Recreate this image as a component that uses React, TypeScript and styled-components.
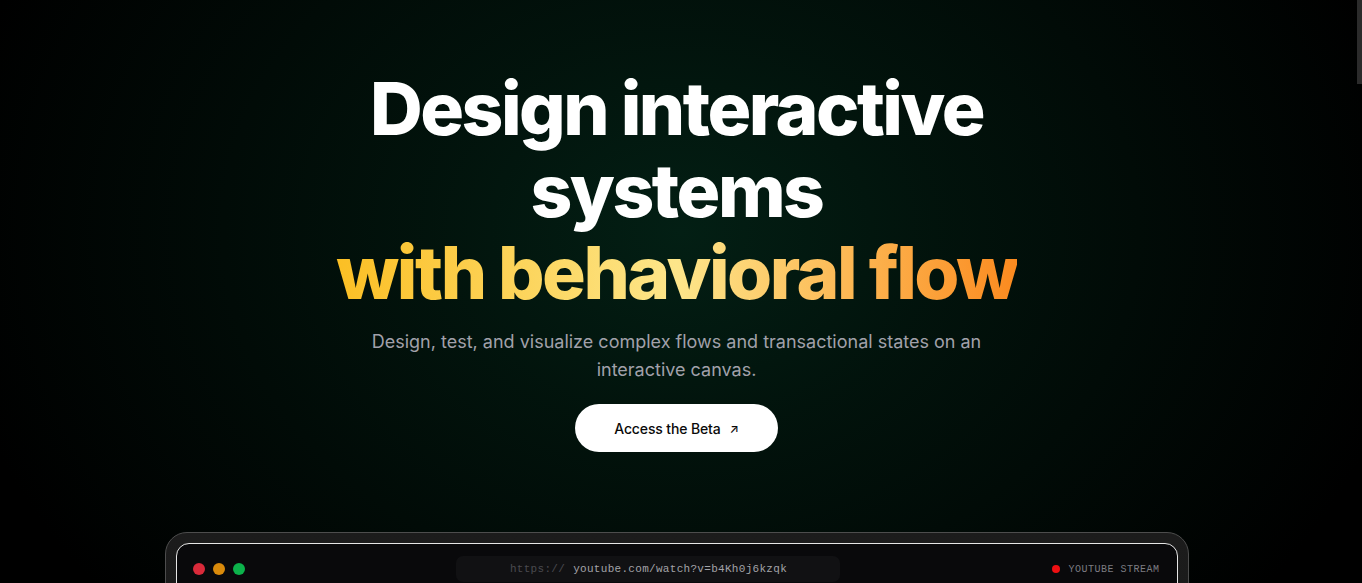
import * as React from "react";
import styled, { createGlobalStyle } from "styled-components";

const GlobalStyle = createGlobalStyle`
  html, body {
    margin: 0;
    padding: 0;
    background: #000;
  }

  * {
    box-sizing: border-box;
  }
`;

const Page = styled.main`
  min-height: 4050px;
  padding-right: 9px;
  background:
    radial-gradient(ellipse 740px 580px at 50% 232px, rgba(3, 31, 20, 1) 0%, rgba(2, 22, 14, 0.85) 35%, rgba(0, 0, 0, 0) 100%),
    #000;
  font-family: Inter, "Noto Sans", sans-serif;
  color: #fff;
`;

/* thin scrollbar drawn over the right edge */
const ScrollThumb = styled.div`
  position: fixed;
  top: 0;
  right: 0;
  width: 5px;
  height: 84px;
  background: #2b2b2b;
`;

const Hero = styled.section`
  display: flex;
  flex-direction: column;
  align-items: center;
  padding-top: 68px;
  text-align: center;
`;

const Heading = styled.h1`
  margin: 0;
  font-family: Inter, "Noto Sans", sans-serif;
  font-weight: 800;
  font-size: 73px;
  line-height: 82px;
  letter-spacing: -0.034em;
  color: #fff;
`;

const Line = styled.span`
  display: block;
`;

const Accent = styled.span`
  display: block;
  background: linear-gradient(90deg, #fbbf24 0%, #fde68a 50%, #fb8a1f 100%);
  -webkit-background-clip: text;
  background-clip: text;
  color: transparent;
`;

const Lead = styled.p`
  max-width: 650px;
  margin: 14px 0 0;
  font-size: 18px;
  line-height: 28px;
  color: #a1a1aa;
`;

const CtaButton = styled.button`
  display: inline-flex;
  align-items: center;
  gap: 9px;
  margin-top: 20px;
  height: 48px;
  padding: 0 39px;
  border: none;
  border-radius: 999px;
  background: #fff;
  color: #0a0a0a;
  font-family: Inter, "Noto Sans", sans-serif;
  font-size: 14px;
  font-weight: 500;
  letter-spacing: -0.01em;
  cursor: pointer;
`;

const Arrow = styled.span`
  font-size: 12px;
`;

const Showcase = styled.div`
  width: 1024px;
  margin: 80px auto 0;
  padding: 10px;
  border: 1px solid #4d4d4d;
  border-radius: 22px;
  background: linear-gradient(180deg, #1c1c1c, #121212);
`;

const Screen = styled.div`
  height: 560px;
  border: 1px solid #e6e6e6;
  border-radius: 13px;
  background: #09090b;
  overflow: hidden;
`;

const WindowBar = styled.div`
  display: flex;
  align-items: center;
  height: 50px;
  padding: 0 17px 0 16px;
`;

const Lights = styled.div`
  display: flex;
  gap: 8px;
`;

const Light = styled.span<{ color: string }>`
  width: 12px;
  height: 12px;
  border-radius: 50%;
  background: ${({ color }) => color};
`;

const AddressSlot = styled.div`
  flex: 1;
  display: flex;
  justify-content: center;
`;

const Address = styled.div`
  display: flex;
  align-items: center;
  justify-content: center;
  gap: 8px;
  width: 384px;
  height: 26px;
  border-radius: 7px;
  background: #111113;
  font-family: "Liberation Mono", "DejaVu Sans Mono", monospace;
  font-size: 11px;
  letter-spacing: 0.3px;
`;

const Scheme = styled.span`
  color: #4a4a4f;
`;

const Url = styled.span`
  color: #a3a3a8;
`;

const Live = styled.div`
  display: flex;
  align-items: center;
  gap: 8px;
  font-family: "Liberation Mono", "DejaVu Sans Mono", monospace;
  font-size: 10px;
  letter-spacing: 0.5px;
  color: #7c7c82;
`;

const LiveDot = styled.span`
  width: 8px;
  height: 8px;
  border-radius: 50%;
  background: #ee0f12;
`;

export default function App() {
  return (
    <Page>
      <GlobalStyle />
      <ScrollThumb />
      <Hero>
        <Heading>
          <Line>Design interactive</Line>
          <Line>systems</Line>
          <Accent>with behavioral flow</Accent>
        </Heading>
        <Lead>
          Design, test, and visualize complex flows and transactional states on
          an interactive canvas.
        </Lead>
        <CtaButton>
          Access the Beta <Arrow>↗</Arrow>
        </CtaButton>
      </Hero>

      <Showcase>
        <Screen>
          <WindowBar>
            <Lights>
              <Light color="#d92a3a" />
              <Light color="#d98a0b" />
              <Light color="#0cb24b" />
            </Lights>
            <AddressSlot>
              <Address>
                <Scheme>https://</Scheme>
                <Url>youtube.com/watch?v=b4Kh0j6kzqk</Url>
              </Address>
            </AddressSlot>
            <Live>
              <LiveDot />
              YOUTUBE STREAM
            </Live>
          </WindowBar>
        </Screen>
      </Showcase>
    </Page>
  );
}
